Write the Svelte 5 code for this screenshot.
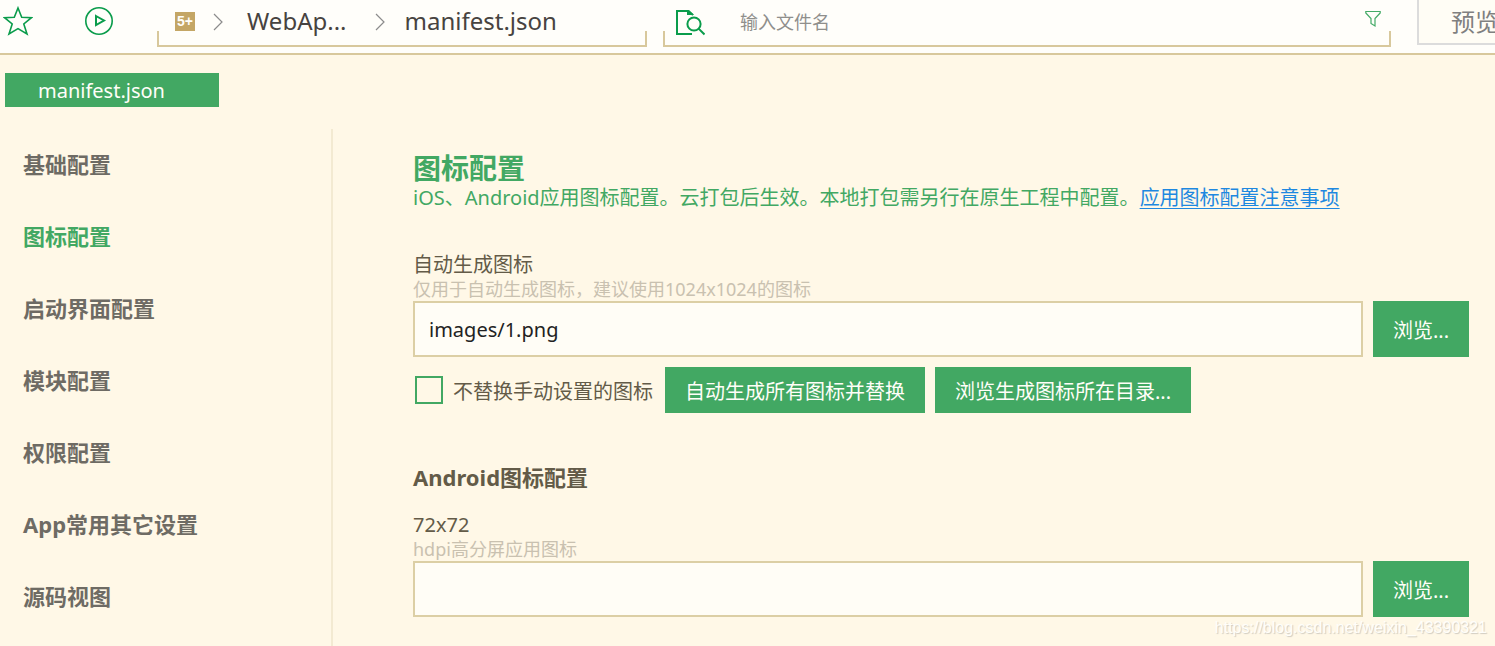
<script lang="ts">
	const sections = [
		'基础配置',
		'图标配置',
		'启动界面配置',
		'模块配置',
		'权限配置',
		'App常用其它设置',
		'源码视图'
	];

	let active = $state('图标配置');
	let query = $state('');
	let iconPath = $state('images/1.png');
	let hdpiPath = $state('');
	let keepManual = $state(false);
</script>

<div class="window">
	<header class="toolbar">
		<button class="icon-btn star" aria-label="收藏">
			<svg width="30" height="30" viewBox="0 0 30 30">
				<path d="M15 2 L18.7 11.3 L28.4 11.7 L20.8 18 L24 28 L15 22.6 L6 28 L9.2 18 L1.6 11.7 L11.3 11.3 Z" />
			</svg>
		</button>
		<button class="icon-btn play" aria-label="运行">
			<svg width="30" height="30" viewBox="0 0 30 30">
				<circle cx="15" cy="15" r="13.2" />
				<path stroke-width="2" d="M12 10 L20 14.5 L12 19 Z" />
			</svg>
		</button>

		<nav class="crumbs well" aria-label="路径">
			<span class="project">5+</span>
			<svg class="chevron first" width="10" height="18" viewBox="0 0 10 18"><path d="M1 1 L9 9 L1 17" /></svg>
			<a href="#project">WebAp...</a>
			<svg class="chevron" width="10" height="18" viewBox="0 0 10 18"><path d="M1 1 L9 9 L1 17" /></svg>
			<a href="#manifest">manifest.json</a>
		</nav>

		<div class="search well">
			<svg class="find" width="30" height="28" viewBox="0 0 30 28">
				<path d="M17 26 H2 V3 H13 L18 7" />
				<path class="solid" d="M12 2 H14 L19 7 H12 Z" />
				<circle cx="19" cy="16" r="6.6" />
				<path d="M23.6 20.6 L29.5 26.5" />
			</svg>
			<input type="text" placeholder="输入文件名" aria-label="输入文件名" bind:value={query} />
			<button class="icon-btn filter" aria-label="过滤">
				<svg width="16" height="18" viewBox="0 0 16 18">
					<path d="M0.8 1.5 H15.2 V3 L10 8.5 V16 L6 13.5 V8.5 L0.8 3 Z" />
				</svg>
			</button>
		</div>

		<button class="preview">预览</button>
	</header>

	<div class="tabs">
		<button class="tab">manifest.json</button>
	</div>

	<div class="body">
		<nav class="sidebar" aria-label="配置">
			{#each sections as section}
				<button class:active={section === active} onclick={() => (active = section)}>{section}</button>
			{/each}
		</nav>

		<main>
			<h2>图标配置</h2>
			<p class="intro">iOS、Android应用图标配置。云打包后生效。本地打包需另行在原生工程中配置。<a href="#notes">应用图标配置注意事项</a></p>

			<div class="field">
				<label for="auto-icon">自动生成图标</label>
				<small>仅用于自动生成图标，建议使用1024x1024的图标</small>
				<div class="row">
					<input id="auto-icon" type="text" bind:value={iconPath} />
					<button class="primary">浏览...</button>
				</div>
			</div>

			<div class="actions">
				<label><input type="checkbox" bind:checked={keepManual} />不替换手动设置的图标</label>
				<button class="primary">自动生成所有图标并替换</button>
				<button class="primary">浏览生成图标所在目录...</button>
			</div>

			<h3>Android图标配置</h3>

			<div class="field">
				<label for="hdpi-icon">72x72</label>
				<small>hdpi高分屏应用图标</small>
				<div class="row">
					<input id="hdpi-icon" type="text" bind:value={hdpiPath} />
					<button class="primary">浏览...</button>
				</div>
			</div>
		</main>
	</div>

	<div class="watermark">https://blog.csdn.net/weixin_43390321</div>
</div>

<style>
	:global(body) {
		margin: 0;
		background: #fff8e7;
	}

	.window {
		position: relative;
		display: flex;
		flex-direction: column;
		height: 100vh;
		overflow: hidden;
		font-family: 'Noto Sans', 'Noto Sans CJK SC', sans-serif;
		font-size: 20px;
		color: #635b48;
	}

	button,
	input {
		box-sizing: border-box;
		margin: 0;
		padding: 0;
		border: 0;
		border-radius: 0;
		background: none;
		font: inherit;
		color: inherit;
	}

	button {
		cursor: pointer;
		white-space: nowrap;
	}

	svg {
		display: block;
		flex-shrink: 0;
		fill: none;
		stroke: #0a9c4b;
		stroke-width: 1.6;
	}

	/* toolbar */
	.toolbar {
		display: flex;
		flex-shrink: 0;
		height: 53px;
		overflow: hidden;
		background: #fffefa;
		border-bottom: 2px solid #d8c89c;
	}

	.icon-btn {
		flex-shrink: 0;
		align-self: flex-start;
	}

	.star {
		margin: 6px 0 0 3px;
	}

	.play {
		margin: 6px 43px 0 51px;
	}

	/* bottom edge with short upturned corners */
	.well {
		position: relative;
		display: flex;
		align-items: center;
		box-sizing: border-box;
		height: 47px;
		padding-bottom: 4px;
	}

	.well::after {
		content: '';
		position: absolute;
		inset: auto 0 0;
		height: 14px;
		border: 2px solid #d8c89c;
		border-top: 0;
		pointer-events: none;
	}

	.crumbs {
		flex: 0 0 490px;
		margin-right: 16px;
		padding-left: 18px;
		font-size: 24px;
		line-height: 32px;
	}

	.crumbs a {
		padding-bottom: 2px;
		color: #474340;
		text-decoration: none;
	}

	.project {
		width: 20px;
		height: 19px;
		background: #c4a665;
		color: #fffefa;
		font: bold 14px/19px 'Liberation Sans', sans-serif;
		text-align: center;
	}

	.chevron {
		margin: 0 20px 0 28px;
		stroke: #8c8c8c;
		stroke-width: 1.2;
	}

	.chevron.first {
		margin-left: 18px;
		margin-right: 24px;
	}

	.search {
		flex: 1;
		min-width: 0;
		padding-left: 12px;
	}

	.find {
		stroke-width: 2;
	}

	.find .solid {
		fill: #0a9c4b;
		stroke: none;
	}

	.search input {
		flex: 1;
		min-width: 0;
		margin-left: 35px;
		font-size: 18px;
		color: #474340;
		outline: none;
	}

	.search input::placeholder {
		color: #8f8f8c;
		opacity: 1;
	}

	.filter {
		margin: 10px 10px 0 0;
	}

	.filter svg {
		stroke: #43aa66;
		stroke-width: 1.2;
	}

	.preview {
		flex: 0 0 116px;
		height: 45px;
		margin: 0 -38px 0 26px;
		padding-bottom: 2px;
		border: 2px solid #dcdcdc;
		border-top: 0;
		background: #fffdf5;
		color: #808080;
		font-size: 24px;
	}

	/* tabs */
	.tabs {
		flex-shrink: 0;
		padding: 18px 5px 22px;
	}

	.tab {
		display: block;
		width: 214px;
		height: 34px;
		padding-left: 33px;
		background: #42a863;
		color: #fffef8;
		text-align: left;
	}

	/* body */
	.body {
		display: flex;
		flex: 1;
		min-height: 0;
	}

	.sidebar {
		display: flex;
		flex-direction: column;
		flex: 0 0 331px;
		border-right: 2px solid #f3ead2;
	}

	.sidebar button {
		flex-shrink: 0;
		height: 72px;
		padding: 0 0 4px 23px;
		font-size: 22px;
		font-weight: bold;
		color: #6e6b64;
		text-align: left;
	}

	.sidebar button.active {
		color: #42a863;
	}

	main {
		flex: 1;
		min-width: 0;
		padding: 21px 26px 0 80px;
	}

	h2 {
		margin: 0;
		font-size: 28px;
		line-height: 36px;
		color: #42a863;
	}

	.intro {
		margin: 0 0 43px;
		line-height: 24px;
		color: #42a863;
	}

	.intro a {
		color: #1e88e0;
		text-decoration-thickness: 1px;
		text-underline-offset: 3px;
	}

	.field label,
	.field small {
		display: block;
		line-height: 24px;
	}

	.field small {
		font-size: 18px;
		color: #c9c1b0;
	}

	.row {
		display: flex;
		gap: 10px;
	}

	.row input {
		flex: 1;
		min-width: 0;
		height: 56px;
		padding: 0 14px;
		border: 2px solid #dccfa5;
		background: #fffdf6;
		color: #222;
	}

	.primary {
		padding: 0 20px;
		background: #42a863;
		color: #fffef8;
	}

	.row .primary {
		width: 96px;
	}

	.actions {
		display: flex;
		gap: 10px;
		margin-top: 10px;
	}

	.actions label {
		display: flex;
		align-items: center;
		margin-right: 2px;
	}

	.actions .primary {
		height: 46px;
	}

	.actions input {
		appearance: none;
		width: 28px;
		height: 28px;
		margin: 0 10px 0 2px;
		border: 2px solid #42a863;
	}

	.actions input:checked {
		background: #42a863;
		box-shadow: inset 0 0 0 4px #fff8e7;
	}

	h3 {
		margin: 48px 0 20px;
		font-size: 22px;
		line-height: 32px;
	}

	.watermark {
		position: absolute;
		right: 8px;
		bottom: 8px;
		font: 16px/20px 'Liberation Sans', sans-serif;
		color: #fffefa;
		text-shadow: 1px 1px 1px #d0cbc0;
	}
</style>
